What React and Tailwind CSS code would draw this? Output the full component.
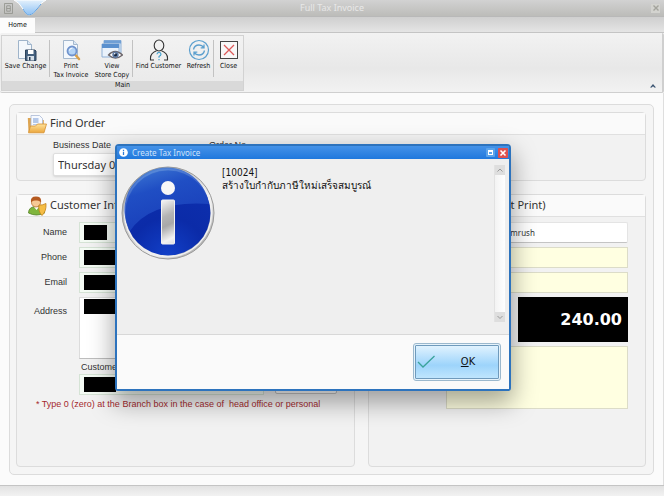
import React from "react";

function SaveIcon() {
  return (
    <svg viewBox="0 0 22 22" className="size-[22px]" fill="none">
      <path d="M3.500 1.500h9l4 4V19.500h-13z" fill="#f4f8fc" stroke="#9fb4ca" />
      <path d="M12.500 1.500v4h4" fill="#dbe8f5" stroke="#9fb4ca" />
      <path d="M10.500 11h9.500l1 1v9.500H10.500z" fill="#45617f" stroke="#2c435c" />
      <rect x="13" y="11" width="5.500" height="4" fill="#fff" />
      <rect x="12.500" y="17" width="6.500" height="4.500" fill="#d5dfe9" />
      <rect x="14" y="18" width="1.500" height="3.500" fill="#23384f" />
    </svg>
  );
}

function PrintIcon() {
  return (
    <svg viewBox="0 0 22 22" className="size-[22px]" fill="none">
      <path d="M3.500 1.500h10l4 4V19.500h-14z" fill="#f4f8fc" stroke="#a5b8cd" />
      <path d="M13.500 1.500v4h4" fill="#dbe8f5" stroke="#a5b8cd" />
      <path d="M15.500 16l3.500 4" stroke="#d9a04a" strokeWidth="2.500" strokeLinecap="round" />
      <circle cx="12" cy="12" r="4.500" fill="#b4d4f6" stroke="#7093cd" strokeWidth="1.800" />
      <path d="M9.500 11.500a3 3 0 0 1 3-2.500" stroke="#fff" />
    </svg>
  );
}

function ViewIcon() {
  return (
    <svg viewBox="0 0 22 22" className="size-[22px]" fill="none">
      <path d="M3 1.500h17v13H3z" fill="#dce9f7" stroke="#8fb0d6" />
      <path d="M3 1.500h17v3H3z" fill="#6f9fd5" />
      <path d="M1 5h17v13H1z" fill="#eaf2fb" stroke="#8fb0d6" />
      <path d="M1 5h17v4H1z" fill="#5a90ce" />
      <path d="M7.500 16q6.500-7 14 0q-7 6-14 0z" fill="#fff" stroke="#6b6468" strokeWidth="1.300" />
      <circle cx="14.500" cy="15.800" r="3.200" fill="#5f7aa3" />
      <circle cx="14.500" cy="15.800" r="1.500" fill="#15233a" />
      <circle cx="13.700" cy="14.800" r=".8" fill="#fff" />
    </svg>
  );
}

function FindIcon() {
  return (
    <svg viewBox="0 0 22 22" className="size-[22px]" fill="none">
      <ellipse cx="11" cy="6.500" rx="4.800" ry="5.500" stroke="#333" strokeWidth="1.100" />
      <path d="M2.500 21v-2q0-5 6-7.300M19.500 21v-2q0-5-6-7.300M2 21h4M16 21h4" stroke="#333" strokeWidth="1.100" />
      <path d="M9 15.300q0-1.800 2-1.800t2 1.800q0 1.200-2 2.200v1.300M11 20v1.300" stroke="#3a9ccb" strokeWidth="1.100" />
    </svg>
  );
}

function RefreshIcon() {
  return (
    <svg viewBox="0 0 22 22" className="size-[22px]" fill="none" stroke="#5b9fce">
      <circle cx="11" cy="11" r="9.500" strokeWidth="1.200" />
      <path d="M5.500 10.500q1-4.500 5.500-4.500 3 0 4.800 2.500M16 5.500v3.300h-3.300M16.500 11.500q-1 4.500-5.500 4.500-3 0-4.800-2.500M6 16.500v-3.300h3.300" strokeWidth="1.300" />
    </svg>
  );
}

function CloseIcon() {
  return (
    <svg viewBox="0 0 22 22" className="size-[22px]" fill="none">
      <rect x="2.500" y="2.500" width="17" height="17" stroke="#444" fill="#f8f8f8" />
      <path d="M6 6l10 10M16 6L6 16" stroke="#dd5a5a" strokeWidth="1.300" />
    </svg>
  );
}

function FolderIcon() {
  return (
    <svg viewBox="0 0 20 20" className="size-5 shrink-0" fill="none">
      <defs>
        <linearGradient id="folder" x1="0" y1="0" x2="0" y2="1">
          <stop offset="0" stopColor="#ffe39c" />
          <stop offset="1" stopColor="#eba63c" />
        </linearGradient>
      </defs>
      <path d="M.8 4h4l1 2h11v12H1.500z" fill="#dda552" />
      <path d="M4 1.500h8.500l3 3V14H4z" fill="#f7faff" stroke="#a9b9d4" strokeWidth=".8" />
      <path d="M6 4h5.500v5H6z" fill="#b5c9ea" />
      <path d="M6 10.500h7" stroke="#b5c9ea" />
      <path d="M1.500 18.800L3.500 12h5l2-2h9L17 18.800z" fill="url(#folder)" stroke="#d58f2e" strokeWidth=".8" />
    </svg>
  );
}

function CustomerIcon() {
  return (
    <svg viewBox="0 0 20 20" className="size-5 shrink-0" fill="none">
      <path d="M1.500 17q0-6.500 8-6.500t8 6.500q-8 4-16 0z" fill="#7fb53c" stroke="#507f22" strokeWidth=".8" />
      <path d="M7 11l2.500 3 2.500-3z" fill="#fff" />
      <circle cx="9" cy="6.500" r="4.500" fill="#f7c995" stroke="#b77336" strokeWidth=".8" />
      <path d="M4 6.500Q3 .6 9 .6q6 0 5 5.900Q12.500 4 9 4.500 5.500 4 4 6.500z" fill="#b55a20" />
      <path d="M12 9q3 .5 7-1.500.5 8-4 12-4-4-3-10.500z" fill="#f5bd45" stroke="#c2811c" strokeWidth=".8" />
    </svg>
  );
}

function InfoIcon() {
  return (
    <svg viewBox="0 0 94 94" className="size-[94px] shrink-0">
      <defs>
        <linearGradient id="rim" x1="0" y1="0" x2="1" y2="1">
          <stop offset="0" stopColor="#9a9a9a" />
          <stop offset=".35" stopColor="#c4c4c4" />
          <stop offset=".65" stopColor="#f4f4f4" />
          <stop offset="1" stopColor="#858585" />
        </linearGradient>
        <radialGradient id="ball" cx=".5" cy="1" r=".9">
          <stop offset="0" stopColor="#1240c8" />
          <stop offset=".5" stopColor="#0b2ba8" />
          <stop offset="1" stopColor="#0d2fae" />
        </radialGradient>
        <linearGradient id="gloss" x1=".2" y1="0" x2=".6" y2="1">
          <stop offset="0" stopColor="#4583da" />
          <stop offset=".35" stopColor="#2354c8" />
          <stop offset="1" stopColor="#1a3fbb" />
        </linearGradient>
        <linearGradient id="stem" gradientUnits="userSpaceOnUse" x1="38" y1="36" x2="58" y2="76">
          <stop offset="0" stopColor="#f4f4f4" />
          <stop offset=".35" stopColor="#b4b4b4" />
          <stop offset=".55" stopColor="#a8a8a8" />
          <stop offset=".85" stopColor="#f2f2f2" />
          <stop offset="1" stopColor="#ddd" />
        </linearGradient>
      </defs>
      <circle cx="47" cy="47" r="46" fill="url(#rim)" stroke="#999" />
      <circle cx="47" cy="47" r="43.500" fill="none" stroke="#f0f0f0" strokeWidth="1.500" />
      <circle cx="47" cy="47" r="42.500" fill="url(#ball)" />
      <path d="M9 65A42.500 42.500 0 1 1 88 38Q30 34 9 65z" fill="url(#gloss)" opacity=".85" />
      <circle cx="47" cy="22" r="7" fill="#f7f7f7" />
      <rect x="40.500" y="34" width="13" height="44" rx="1" fill="url(#stem)" stroke="#f2f2f2" />
    </svg>
  );
}

function Tool({ icon, lines, width }) {
  return (
    <button className={`${width} flex shrink-0 flex-col items-center pt-[3px] text-[7px] leading-[9px] text-[#111]`}>
      {icon}
      <span className="flex flex-col items-center pt-px whitespace-nowrap">
        {lines.map((l) => <span key={l}>{l}</span>)}
      </span>
    </button>
  );
}

function Divider() {
  return <span className="my-1 w-px shrink-0 bg-[#c2c2c2]" />;
}

function Panel({ title, icon, className, children }) {
  return (
    <section className={`${className} min-w-0 rounded-sm border border-[#dcdcdc] bg-[#f2f2f2]`}>
      <h2 className="flex h-[22px] items-center gap-[3px] border-b border-[#e0e0e0] bg-[#fafafa] pl-2.5 font-['Noto_Sans',sans-serif] text-[11px] whitespace-nowrap text-[#333]">
        {icon}
        {title}
      </h2>
      {children}
    </section>
  );
}

function Row({ id, label, block }) {
  return (
    <div className="flex items-center gap-3">
      <label htmlFor={id} className="w-[50px] text-right">{label}</label>
      <div className="flex h-[21px] min-w-0 flex-1 items-center border border-[#d5e3d5] bg-[#f4fbf4] pl-1">
        <span className={`${block} h-[15px] shrink-0 bg-black`} />
        <input id={id} className="w-0 min-w-0 flex-1 bg-transparent outline-none" />
      </div>
    </div>
  );
}

function Dialog() {
  return (
    <div role="dialog" aria-labelledby="dialog-title" className="absolute top-[144px] left-[115px] flex h-[247px] w-[396px] flex-col rounded-t-[4px] rounded-b-[3px] border-2 border-[#2d73bd] bg-[#efefef] shadow-[0_10px_24px_2px_rgba(0,0,0,0.35)]">
      <header className="flex h-[13px] shrink-0 items-center bg-linear-to-b from-[#4492e8] to-[#1f78dd] pr-px pl-0.5 text-white">
        <svg viewBox="0 0 10 10" className="mr-1 size-[9px]">
          <circle cx="5" cy="5" r="4.800" fill="#fff" />
          <path d="M5 4.300v3.500M5 2v1.300" stroke="#2d7bd8" strokeWidth="1.400" />
        </svg>
        <h1 id="dialog-title" className="font-['Noto_Sans',sans-serif] text-[8px] leading-3 text-[#cfe4fc]">Create Tax Invoice</h1>
        <button aria-label="Maximize" className="mr-[3px] ml-auto flex size-[9px] items-center justify-center rounded-[1px] bg-[#5ba3ea]">
          <span className="size-[5px] border border-t-2 border-white" />
        </button>
        <button aria-label="Close dialog" className="flex size-[10px] items-center justify-center rounded-[1px] bg-[#dc5050]">
          <svg viewBox="0 0 8 8" className="size-2"><path d="M1.500 1.500l5 5M6.500 1.500l-5 5" stroke="#fff" strokeWidth="1.600" /></svg>
        </button>
      </header>
      <div className="flex flex-1 border-b border-[#d8d8d8] pr-1 pl-1">
        <div className="pt-[7px]"><InfoIcon /></div>
        <div className="flex-1 pt-[7px] pl-[7px] leading-[13px] whitespace-nowrap text-[#111]">
          <p className="font-['DejaVu_Sans_Condensed','DejaVu_Sans',sans-serif] text-[10px]">[10024]</p>
          <p className="font-['Noto_Sans','DejaVu_Sans',sans-serif] text-[10px]">สร้างใบกำกับภาษีใหม่เสร็จสมบูรณ์</p>
        </div>
        <div className="mt-[6px] mb-[12px] flex w-[11px] flex-col justify-between border-l border-[#e2e2e2] bg-linear-to-r from-[#f3f3f3] to-white">
          <button aria-label="Scroll up" className="flex h-[10px] items-center justify-center bg-[#dedede]">
            <svg viewBox="0 0 8 8" className="size-2" fill="none" stroke="#999"><path d="M1.500 5.500L4 3l2.500 2.500" /></svg>
          </button>
          <button aria-label="Scroll down" className="flex h-[10px] items-center justify-center bg-[#dedede]">
            <svg viewBox="0 0 8 8" className="size-2" fill="none" stroke="#999"><path d="M1.500 3L4 5.500 6.500 3" /></svg>
          </button>
        </div>
      </div>
      <footer className="flex h-[54px] shrink-0 items-center justify-end bg-[#fafafa] pr-2">
        <button className="flex h-[38px] w-[88px] items-center rounded-[3px] border border-[#9bb8cd] bg-[#e6f3fb] p-px">
          <span className="flex h-full w-full items-center rounded-[1px] border border-[#6f9abc] bg-linear-to-b from-[#e0f2fe] from-0% via-[#9dd4fb] via-60% to-[#bfe5fd]">
            <svg viewBox="0 0 20 16" className="h-4 w-5" fill="none"><path d="M2 8l5 5L18.500 2" stroke="#3aa39b" strokeWidth="1.300" /></svg>
            <span className="flex-1 pl-0.5 text-center font-['DejaVu_Sans_Condensed','DejaVu_Sans',sans-serif] text-[11px] text-[#111]"><u>O</u>K</span>
          </span>
        </button>
      </footer>
    </div>
  );
}

export default function App() {
  return (
    <div className="relative flex min-h-screen flex-col overflow-hidden bg-[#fbfbfb] font-['Liberation_Sans',Arial,sans-serif] text-[9px] text-[#333]">
      <header className="relative flex h-[17px] items-center justify-between border-b border-[#b8b8b8] bg-linear-to-b from-[#d2d2d2] to-[#bcbcb9] px-1">
        <svg viewBox="0 0 10 12" className="h-[11px] w-[9px]" fill="none" stroke="#94958f"><path d="M.5.500h9v11h-9zM3 3h4v6H3zM3 6h4" /></svg>
        <svg viewBox="0 0 32 16" className="absolute top-0 left-[14px] h-4 w-8">
          <defs><linearGradient id="orb" x1="0" y1="0" x2="0" y2="1"><stop offset="0" stopColor="#e4f1fc" /><stop offset="1" stopColor="#8cc0f4" /></linearGradient></defs>
          <path d="M0 0h32q-5 2-9 9-4 6-8 6-3 0-6-6Q5 2 0 0z" fill="url(#orb)" stroke="#fff" />
          <path d="M9 9q3 6 6 6 4 0 8-6l4-5" fill="none" stroke="#5b9fe2" />
        </svg>
        <span className="flex-1 text-center font-['Noto_Sans',sans-serif] text-[9px] leading-4 text-[#e8e8e8]">Full Tax Invoice</span>
        <button aria-label="Close window" className="flex size-[9px] items-center justify-center bg-[#d3d3cf]">
          <svg viewBox="0 0 8 8" className="size-2"><path d="M1.500 1.500l5 5M6.500 1.500l-5 5" stroke="#a3a39c" strokeWidth="1.400" /></svg>
        </button>
      </header>

      <nav className="flex h-[16px] items-end bg-linear-to-b from-[#cfcfcf] to-[#e6e6e6]">
        <button className="h-[15px] w-[35px] bg-[#fcfcfc] font-['DejaVu_Sans_Condensed','DejaVu_Sans',sans-serif] text-[7px] text-[#111]">Home</button>
        <span className="h-px flex-1 bg-[#c4c4c4]" />
      </nav>

      <div className="flex h-[60px] justify-between rounded-[2px] border-r-2 border-b border-[#cfcfcf] bg-linear-to-b from-[#f2f2f2] from-0% via-[#e8e8e8] via-60% to-[#f2f2f2] pt-0.5 pr-1.5 pl-px font-['DejaVu_Sans_Condensed','DejaVu_Sans',sans-serif]">
        <div className="flex h-[56px] w-[243px] flex-col border border-[#d2d2d2] bg-linear-to-b from-[#f2f2f2] to-[#e9e9e9]">
          <div className="flex h-[45px]">
            <Tool icon={<SaveIcon />} lines={["Save Change"]} width="w-[47px]" />
            <Divider />
            <Tool icon={<PrintIcon />} lines={["Print", "Tax Invoice"]} width="w-[42px]" />
            <Tool icon={<ViewIcon />} lines={["View", "Store Copy"]} width="w-[40px]" />
            <Divider />
            <Tool icon={<FindIcon />} lines={["Find Customer"]} width="w-[51px]" />
            <Tool icon={<RefreshIcon />} lines={["Refresh"]} width="w-[29px]" />
            <Divider />
            <Tool icon={<CloseIcon />} lines={["Close"]} width="w-[29px]" />
          </div>
          <span className="flex-1 bg-[#d9d9d9] text-center text-[7px] leading-[9px] text-[#111]">Main</span>
        </div>
        <button aria-label="Collapse ribbon" className="self-end pb-1">
          <svg viewBox="0 0 6 5" className="h-[5px] w-1.5" fill="#3c5572"><path d="M0 4.500L3 1l3 3.500H4.200L3 3.300 1.800 4.500z" /></svg>
        </button>
      </div>

      <main className="flex flex-1 flex-col border-r border-[#dedede] px-[9px] pt-[11px] pb-[10px]">
        <div className="flex flex-1 flex-col gap-[13px] rounded-[5px] border border-[#dcdcdc] bg-[#f5f5f5] py-[7px] pr-[7px] pl-1.5">
          <Panel title="Find Order" icon={<FolderIcon />} className="h-[69px] shrink-0">
            <div className="grid grid-cols-[144px_1fr] gap-x-3 pt-1.5 pl-9 leading-[9px]">
              <label htmlFor="date">Business Date</label>
              <label htmlFor="order">Order No.</label>
              <input id="date" defaultValue="Thursday 0" className="mt-[3px] h-[23px] rounded-[2px] border border-[#dedede] bg-white px-1 font-['Noto_Sans',sans-serif] text-[11px] shadow-sm" />
              <input id="order" className="mt-[3px] h-[23px] w-[120px] rounded-[2px] border border-[#dedede] bg-white px-1" />
            </div>
          </Panel>

          <div className="flex flex-1 gap-[13px]">
            <Panel title="Customer Inf" icon={<CustomerIcon />} className="flex-[339]">
              <div className="flex flex-col gap-1 pt-[5px] pr-[17px]">
                <Row id="name" label="Name" block="w-[23px]" />
                <Row id="phone" label="Phone" block="w-8" />
                <Row id="email" label="Email" block="w-8" />
                <div className="flex gap-3">
                  <label htmlFor="address" className="w-[50px] pt-2 text-right leading-3">Address</label>
                  <div className="flex h-[62px] min-w-0 flex-1 border border-[#dcdcdc] border-b-[#bdbdbd] bg-white pt-px pl-1">
                    <span className="h-[15px] w-8 shrink-0 bg-black" />
                    <textarea id="address" className="w-0 flex-1 resize-none outline-none" />
                  </div>
                </div>
                <div className="pl-[62px]">
                  <label htmlFor="taxid" className="block pb-0.5 pl-0.5 leading-[9px]">Customer</label>
                  <div className="flex gap-[11px]">
                    <div className="flex h-[21px] min-w-0 flex-1 items-center border border-[#d5e3d5] bg-[#f4fbf4] pl-1">
                      <span className="h-[15px] w-8 shrink-0 bg-black" />
                      <input id="taxid" className="w-0 flex-1 bg-transparent outline-none" />
                    </div>
                    <input aria-label="Branch" className="h-5 w-[62px] rounded-[2px] border border-[#c4c4c4] bg-white" />
                  </div>
                </div>
              </div>
              <p className="pt-[3px] pl-[19px] leading-3 whitespace-pre text-[#a52a2e]">* Type 0 (zero) at the Branch box in the case of  head office or personal</p>
            </Panel>

            <Panel title={<span className="pl-[126px]">ct Print)</span>} className="flex-[277]">
              <div className="flex flex-col gap-1 pt-[5px] pr-[17px] pl-[77px]">
                <input aria-label="Cashier" defaultValue="mrush" className="h-[21px] w-full rounded-[2px] border border-[#e4e4e4] border-b-[#c4c4c4] bg-white pl-[63px] font-['Noto_Sans',sans-serif] text-[8px]" />
                <input aria-label="Receipt" className="h-[21px] w-full border border-[#dcdcc8] bg-[#ffffe1]" />
                <input aria-label="Terminal" className="h-[21px] w-full border border-[#dcdcc8] bg-[#ffffe1]" />
                <output className="flex h-[45px] w-[110px] items-center justify-end self-end bg-black pr-1.5 font-['DejaVu_Sans',sans-serif] text-[16px] font-bold text-white">240.00</output>
                <textarea aria-label="Remark" className="block h-[63px] w-full resize-none border border-[#dcdcc8] bg-[#ffffe1]" />
              </div>
            </Panel>
          </div>
        </div>
      </main>

      <footer className="h-[11px] border-t border-[#c4c4c4] bg-linear-to-b from-[#e2e2e2] to-[#f2f2f2]" />
      <Dialog />
    </div>
  );
}
